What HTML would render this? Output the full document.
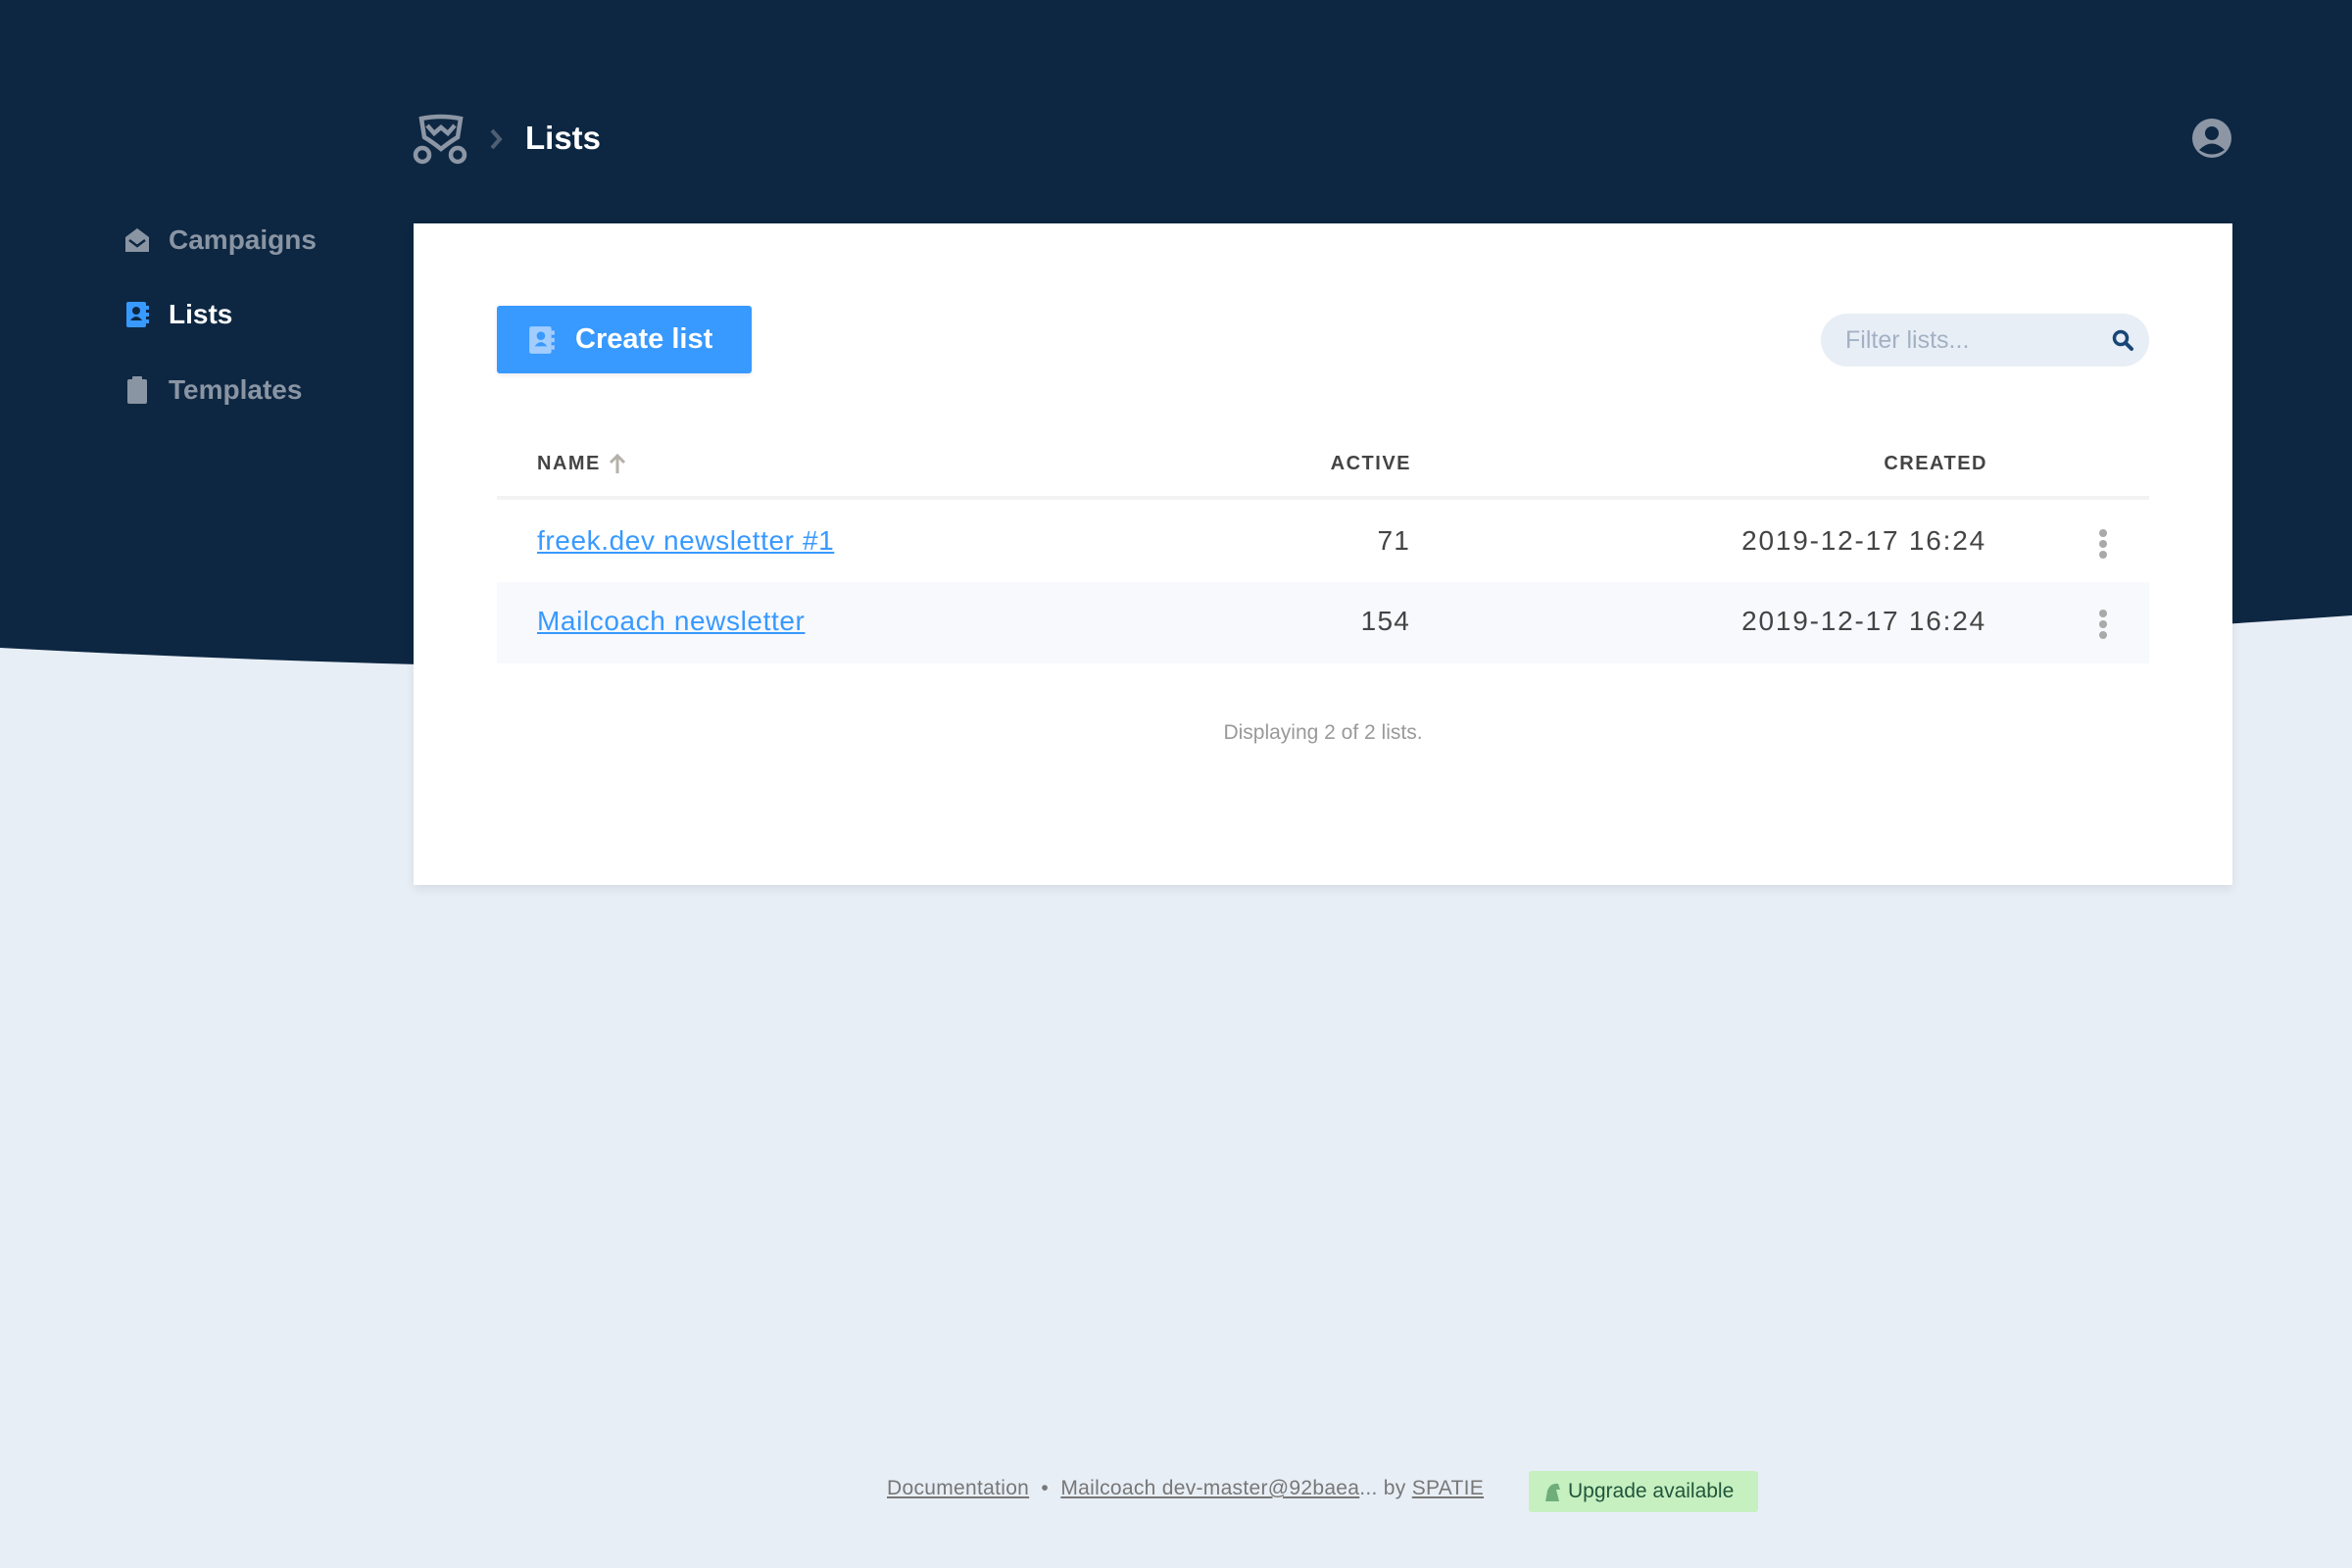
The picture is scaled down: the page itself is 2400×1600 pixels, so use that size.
<!DOCTYPE html>
<html><head><meta charset="utf-8"><style>
*{margin:0;padding:0;box-sizing:border-box}
body{width:2400px;height:1600px;background:#e8eef6;font-family:"Liberation Sans",sans-serif;position:relative;overflow:hidden}
.abs{position:absolute}
.nav{left:127px;font-size:28px;font-weight:bold;color:#8a95a4;display:flex;align-items:center;gap:19px}
.card{left:422px;top:228px;width:1856px;height:675px;background:#fff;box-shadow:0 4px 10px rgba(0,0,0,.08)}
.th{top:461px;font-size:20px;line-height:24px;font-weight:bold;color:#444;letter-spacing:1.5px}
.row{left:507px;width:1686px;height:83px}
.cell{font-size:28px;color:#444;letter-spacing:1.2px}
a{color:#3899ff}
.dots{width:8px}
.dots i{display:block;width:8px;height:8px;border-radius:50%;background:#a9a9a9;margin-bottom:3px}
.foot{top:1507px;font-size:21px;color:#777;letter-spacing:0.3px}
.foot a{color:#777}
</style></head><body>
<svg class="abs" style="left:0;top:0" width="2400" height="700"><path d="M0,661Q1100,720 2400,628V0H0Z" fill="#0d2742"/></svg>

<svg class="abs" style="left:420px;top:115px" width="60" height="54" viewBox="0 0 60 54">
<g fill="none" stroke="#8c96a5" stroke-width="4.5">
<path d="M10,6 Q30,2 50,6 L47,25 Q40,29 30,37 Q20,29 13,25 Z"/>
<path d="M16,13 L23,21 L30,15 L37,21 L44,13"/>
<circle cx="11" cy="43" r="7"/><circle cx="47" cy="43" r="7"/>
</g></svg>
<svg class="abs" style="left:498px;top:130px" width="16" height="24"><path d="M4,3 L12,12 L4,21" fill="none" stroke="#4e5f74" stroke-width="4"/></svg>
<div class="abs" style="left:536px;top:122px;font-size:33px;font-weight:bold;color:#fff">Lists</div>
<svg class="abs" style="left:2236px;top:120px" width="42" height="42" viewBox="0 0 42 42"><circle cx="21" cy="21" r="20" fill="#8c96a5"/><circle cx="21" cy="16" r="7" fill="#0d2742"/><path d="M8,33 Q21,20 34,33 Q21,42 8,33Z" fill="#0d2742"/></svg>

<div class="abs nav" style="top:229px"><svg width="26" height="26" viewBox="0 0 26 26"><path d="M1,10 L13,1 L25,10 V25 H1Z" fill="#8a95a4"/><path d="M5,13 L13,19 L21,13" fill="none" stroke="#0d2742" stroke-width="2.5"/></svg>Campaigns</div>
<div class="abs nav" style="top:305px;color:#fff"><svg width="26" height="28" viewBox="0 0 26 28"><rect x="2" y="1" width="20" height="26" rx="2" fill="#3899ff"/><circle cx="12" cy="10" r="4" fill="#0d2742"/><path d="M6,20 Q12,12 18,20Z" fill="#0d2742"/><rect x="22" y="5" width="3" height="4" fill="#3899ff"/><rect x="22" y="12" width="3" height="4" fill="#3899ff"/><rect x="22" y="19" width="3" height="4" fill="#3899ff"/></svg>Lists</div>
<div class="abs nav" style="top:382px"><svg width="26" height="30" viewBox="0 0 26 30"><rect x="3" y="4" width="20" height="25" rx="2" fill="#8a95a4"/><rect x="8" y="1" width="10" height="6" rx="1" fill="#8a95a4"/></svg>Templates</div>

<div class="abs card"></div>
<div class="abs" style="left:507px;top:312px;width:260px;height:69px;background:#3899ff;border-radius:3px;box-shadow:0 2px 4px rgba(0,0,0,.08);display:flex;align-items:center;padding-left:32px;gap:20px;color:#fff;font-size:29px;font-weight:bold">
<svg width="28" height="30" viewBox="0 0 26 28"><rect x="1" y="1" width="21" height="26" rx="2" fill="#a3cdfc"/><circle cx="12" cy="10" r="4" fill="#3899ff"/><path d="M6,20 Q12,12 18,20Z" fill="#3899ff"/><rect x="22" y="5" width="3" height="4" fill="#a3cdfc"/><rect x="22" y="12" width="3" height="4" fill="#a3cdfc"/><rect x="22" y="19" width="3" height="4" fill="#a3cdfc"/></svg>Create list</div>
<div class="abs" style="left:1858px;top:320px;width:335px;height:54px;background:#e8eef6;border-radius:27px;font-size:25px;color:#a3b1c4;padding:13px 0 0 25px">Filter lists...</div>
<svg class="abs" style="left:2154px;top:335px" width="24" height="24" viewBox="0 0 24 24"><circle cx="10" cy="10" r="6.5" fill="none" stroke="#184777" stroke-width="3.5"/><path d="M15,15 L21,21" stroke="#184777" stroke-width="4" stroke-linecap="round"/></svg>

<div class="abs th" style="left:548px">NAME</div>
<svg class="abs" style="left:620px;top:462px" width="20" height="22" viewBox="0 0 20 22"><path d="M10,21V3M3,10L10,3L17,10" fill="none" stroke="#b5b0aa" stroke-width="3"/></svg>
<div class="abs th" style="left:1200px;width:240px;text-align:right">ACTIVE</div>
<div class="abs th" style="left:1700px;width:328px;text-align:right">CREATED</div>
<div class="abs" style="left:507px;top:506px;width:1686px;height:4px;background:#f3f3f3"></div>

<div class="abs row" style="top:511px"></div>
<div class="abs row" style="top:594px;background:#f7f9fc"></div>
<div class="abs cell" style="left:548px;top:536px;letter-spacing:0.6px"><a href="#">freek.dev newsletter #1</a></div>
<div class="abs cell" style="left:548px;top:618px;letter-spacing:0.6px"><a href="#">Mailcoach newsletter</a></div>
<div class="abs cell" style="left:1200px;width:239px;text-align:right;top:536px">71</div>
<div class="abs cell" style="left:1200px;width:239px;text-align:right;top:618px">154</div>
<div class="abs cell" style="left:1600px;width:427px;text-align:right;top:536px;letter-spacing:1.8px">2019-12-17 16:24</div>
<div class="abs cell" style="left:1600px;width:427px;text-align:right;top:618px;letter-spacing:1.8px">2019-12-17 16:24</div>
<div class="abs dots" style="left:2142px;top:540px"><i></i><i></i><i></i></div>
<div class="abs dots" style="left:2142px;top:622px"><i></i><i></i><i></i></div>

<div class="abs" style="left:422px;width:1856px;text-align:center;top:736px;font-size:21px;color:#999">Displaying 2 of 2 lists.</div>

<div class="abs foot" style="left:905px"><a href="#">Documentation</a> &nbsp;&bull;&nbsp; <a href="#">Mailcoach dev-master@92baea</a>... by <a href="#">SPATIE</a></div>
<div class="abs" style="left:1560px;top:1501px;width:234px;height:42px;background:#c6f0c0;border-radius:3px;font-size:21px;color:#21563a;display:flex;align-items:center;padding-left:14px;gap:6px"><svg width="20" height="22" viewBox="0 0 20 22"><path d="M3,21 L5,10 Q8,2 16,3 L18,9 L14,9 L17,21Z" fill="#6fae7a"/></svg>Upgrade available</div>
</body></html>
